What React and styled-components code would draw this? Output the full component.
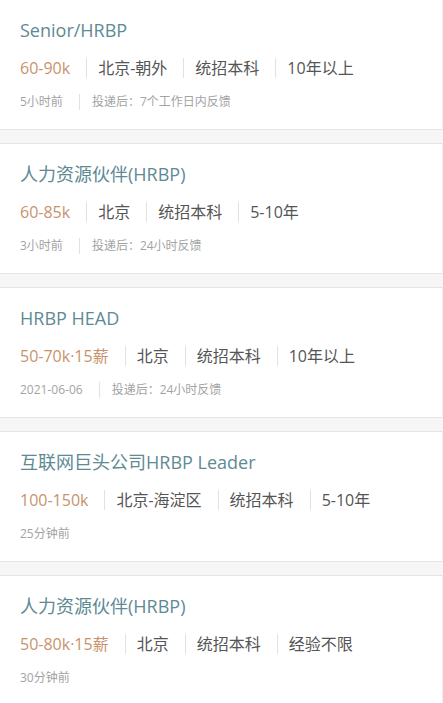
import React from "react";
import styled, { createGlobalStyle } from "styled-components";

const Global = createGlobalStyle`
  html, body { margin: 0; padding: 0; background: #f6f6f6; }
  body {
    font-family: "Open Sans", "Noto Sans CJK SC", sans-serif;
    overflow: hidden;
  }
`;

const List = styled.div`
  display: flex;
  flex-direction: column;
  gap: 13px;
  margin-top: -1px;
`;

const Card = styled.div`
  background: #fff;
  border-top: 1px solid #e4e4e4;
  border-bottom: 1px solid #e4e4e4;
  border-right: 1px solid #f0f0f0;
  padding: 17px 20px 0;
  height: 131px;
  box-sizing: border-box;
`;

const Title = styled.div`
  font-size: 18px;
  line-height: 26px;
  color: #5e8a94;
  white-space: nowrap;
`;

const Tags = styled.div`
  display: flex;
  align-items: center;
  margin-top: 15px;
  font-size: 16px;
  line-height: 20px;
  color: #555;
`;

const Tag = styled.span`
  color: ${(p) => (p.$salary ? "#c8936c" : "#555")};
  & + & {
    margin-left: 16px;
    padding-left: 11px;
    border-left: 1px solid #e2e2e2;
  }
`;

const Meta = styled.div`
  display: flex;
  align-items: center;
  margin-top: 16px;
  font-size: 12px;
  line-height: 16px;
  color: #a3a3a3;
`;

const MetaItem = styled.span`
  & + & {
    margin-left: 16px;
    padding-left: 12px;
    border-left: 1px solid #e2e2e2;
  }
`;

const jobs = [
  {
    title: "Senior/HRBP",
    salary: "60-90k",
    tags: ["北京-朝外", "统招本科", "10年以上"],
    meta: ["5小时前", "投递后：7个工作日内反馈"],
  },
  {
    title: "人力资源伙伴(HRBP)",
    salary: "60-85k",
    tags: ["北京", "统招本科", "5-10年"],
    meta: ["3小时前", "投递后：24小时反馈"],
  },
  {
    title: "HRBP HEAD",
    salary: "50-70k·15薪",
    tags: ["北京", "统招本科", "10年以上"],
    meta: ["2021-06-06", "投递后：24小时反馈"],
  },
  {
    title: "互联网巨头公司HRBP Leader",
    salary: "100-150k",
    tags: ["北京-海淀区", "统招本科", "5-10年"],
    meta: ["25分钟前"],
  },
  {
    title: "人力资源伙伴(HRBP)",
    salary: "50-80k·15薪",
    tags: ["北京", "统招本科", "经验不限"],
    meta: ["30分钟前"],
  },
];

export default function App() {
  return (
    <>
      <Global />
      <List>
        {jobs.map((j, i) => (
          <Card key={i}>
            <Title>{j.title}</Title>
            <Tags>
              <Tag $salary>{j.salary}</Tag>
              {j.tags.map((t) => (
                <Tag key={t}>{t}</Tag>
              ))}
            </Tags>
            <Meta>
              {j.meta.map((m) => (
                <MetaItem key={m}>{m}</MetaItem>
              ))}
            </Meta>
          </Card>
        ))}
      </List>
    </>
  );
}
